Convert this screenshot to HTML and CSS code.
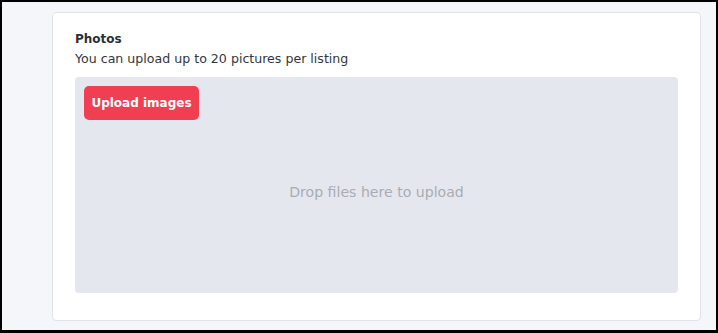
FILE: index.html
```html
<!DOCTYPE html>
<html>
<head>
<meta charset="utf-8">
<link rel="stylesheet" href="styles.css">
</head>
<body>
<div class="frame">
  <section class="card">
    <h2 class="title">Photos</h2>
    <p class="subtitle">You can upload up to 20 pictures per listing</p>
    <div class="dropzone">
      <button class="upload-btn" type="button">Upload images</button>
      <div class="drop-msg">Drop files here to upload</div>
    </div>
  </section>
</div>
</body>
</html>
```
FILE: styles.css
```css
html, body {
  margin: 0;
  padding: 0;
}
body {
  font-family: "DejaVu Sans", "Noto Sans", sans-serif;
  background: #000;
}
.frame {
  box-sizing: border-box;
  width: 718px;
  height: 333px;
  border-style: solid;
  border-color: #000;
  border-width: 2px 2px 3px 2px;
  background: #f5f6fa;
  padding: 10px 15px 9px 50px;
}
.card {
  box-sizing: border-box;
  height: 309px;
  background: #fff;
  border: 1px solid #e1e3e8;
  border-radius: 4px;
  padding: 16px 22px 0 22px;
}
.title {
  margin: 0;
  font-size: 12px;
  font-weight: 700;
  line-height: 20px;
  color: #2c2f36;
}
.subtitle {
  margin: 0;
  font-size: 12.6px;
  line-height: 20px;
  color: #33363d;
}
.dropzone {
  margin-top: 8px;
  height: 216px;
  background: #e5e7ee;
  border-radius: 4px;
  padding: 9px;
  box-sizing: border-box;
  display: flex;
  flex-direction: column;
  align-items: flex-start;
}
.upload-btn {
  font-family: inherit;
  width: 115px;
  height: 34px;
  border: 0;
  border-radius: 5px;
  background: #f03f52;
  color: #fff;
  font-size: 12px;
  font-weight: 700;
  padding: 0;
}
.drop-msg {
  align-self: stretch;
  text-align: center;
  margin-top: 64px;
  font-size: 14.1px;
  color: #a9acb3;
}
```
